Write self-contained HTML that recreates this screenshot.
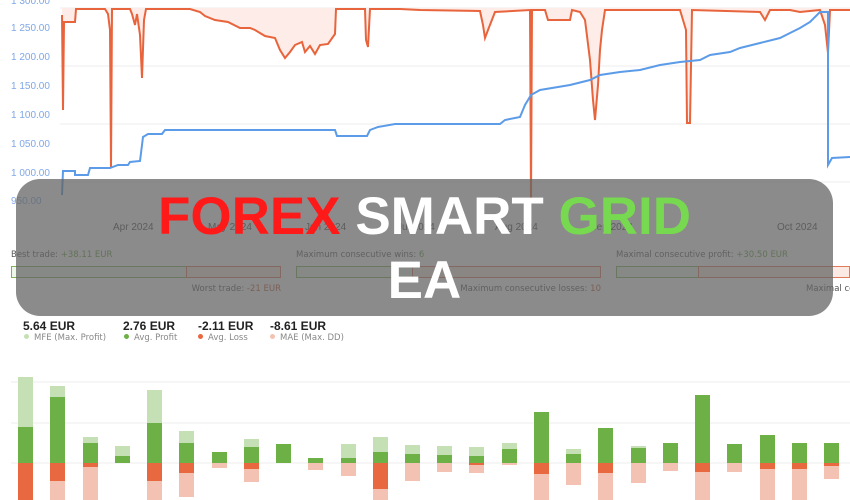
<!DOCTYPE html>
<html><head><meta charset="utf-8"><style>
html,body{margin:0;width:850px;height:500px;overflow:hidden;background:#fff;font-family:"Liberation Sans",sans-serif}
#w{position:relative;width:850px;height:500px;overflow:hidden}
.ab{position:absolute;white-space:nowrap}
.yl{position:absolute;left:11px;font-size:10px;color:#7fa7e6}
.xl{position:absolute;top:222px;font-size:10px;color:#444}
.st{font-size:8.5px;color:#555;font-family:"DejaVu Sans",sans-serif}
.val{font-size:12px;font-weight:bold;color:#222}
.lab{font-size:8.5px;color:#888;font-family:"DejaVu Sans",sans-serif}
.dot{display:inline-block;width:5px;height:5px;border-radius:50%;margin-right:5px;vertical-align:1px}
#ov{position:absolute;left:16px;top:179px;width:817px;height:137px;border-radius:24px;background:rgba(100,100,100,0.75)}
#tt{position:absolute;left:16px;top:179px;width:817px;text-align:center;font-weight:bold;font-size:53px;line-height:64px;padding-top:6px;color:#fff}
</style></head><body><div id="w">
<div class="yl" style="top:-4px">1 300.00</div>
<div class="yl" style="top:23px">1 250.00</div>
<div class="yl" style="top:52px">1 200.00</div>
<div class="yl" style="top:81px">1 150.00</div>
<div class="yl" style="top:110px">1 100.00</div>
<div class="yl" style="top:139px">1 050.00</div>
<div class="yl" style="top:168px">1 000.00</div>
<div class="yl" style="top:196px">950.00</div>
<svg class="ab" style="left:0;top:0" width="850" height="500">
<g stroke="#eee" stroke-width="1"><line x1="60" y1="8" x2="850" y2="8"/><line x1="60" y1="66" x2="850" y2="66"/><line x1="60" y1="124" x2="850" y2="124"/><line x1="60" y1="182" x2="850" y2="182"/>
<line x1="11" y1="382" x2="850" y2="382"/><line x1="11" y1="423" x2="850" y2="423"/><line x1="11" y1="463" x2="850" y2="463"/></g>
<path d="M62,8 L62,15 63,110 64,22 75,22 76,9 105,9 108,14 110,30 111,168 112,9 130,9 132,14 135,25 137,14 140,35 142,78 144,20 146,9 190,9 200,12 205,16 215,20 228,22 240,28 250,28 255,30 265,36 275,38 280,50 285,58 290,52 295,45 302,42 305,52 310,46 315,54 320,45 328,44 335,34 336,9 365,9 366,40 368,47 370,9 400,9 420,10 480,11 483,25 485,38 488,30 495,12 530,10 531,200 532,10 545,10 548,20 570,20 572,10 580,12 585,20 590,60 593,100 595,120 598,85 600,50 602,30 605,10 680,10 686,30 687,123 690,123 692,10 760,12 765,20 770,10 790,10 800,12 820,10 825,25 828,53 830,10 850,10 L850,8 Z" fill="#fdece7" stroke="none"/>
<polyline fill="none" stroke="#e8643c" stroke-width="2" points="62,15 63,110 64,22 75,22 76,9 105,9 108,14 110,30 111,168 112,9 130,9 132,14 135,25 137,14 140,35 142,78 144,20 146,9 190,9 200,12 205,16 215,20 228,22 240,28 250,28 255,30 265,36 275,38 280,50 285,58 290,52 295,45 302,42 305,52 310,46 315,54 320,45 328,44 335,34 336,9 365,9 366,40 368,47 370,9 400,9 420,10 480,11 483,25 485,38 488,30 495,12 530,10 531,200 532,10 545,10 548,20 570,20 572,10 580,12 585,20 590,60 593,100 595,120 598,85 600,50 602,30 605,10 680,10 686,30 687,123 690,123 692,10 760,12 765,20 770,10 790,10 800,12 820,10 825,25 828,53 830,10 850,10"/>
<polyline fill="none" stroke="#5b9be8" stroke-width="2" points="62,195 63,171 75,171 75,175 88,175 90,168 110,168 118,165 128,165 130,162 140,161 143,137 148,134 162,134 165,130 335,130 337,136 367,136 370,130 378,127 395,124 500,124 505,120 520,117 525,105 531,95 540,90 570,85 590,80 600,75 620,72 640,70 660,65 680,62 700,60 710,55 730,52 740,48 760,43 780,38 790,33 800,28 810,22 820,12 828,12 828,165 832,158 850,157"/>
<g>
<rect x="18" y="377" width="15" height="50" fill="#c5e0b4"/><rect x="18" y="427" width="15" height="36" fill="#6db046"/><rect x="18" y="463" width="15" height="37" fill="#e8683f"/>
<rect x="50" y="386" width="15" height="11" fill="#c5e0b4"/><rect x="50" y="397" width="15" height="66" fill="#6db046"/><rect x="50" y="463" width="15" height="18" fill="#e8683f"/><rect x="50" y="481" width="15" height="19" fill="#f4c2b2"/>
<rect x="83" y="437" width="15" height="6" fill="#c5e0b4"/><rect x="83" y="443" width="15" height="20" fill="#6db046"/><rect x="83" y="463" width="15" height="4" fill="#e8683f"/><rect x="83" y="467" width="15" height="33" fill="#f4c2b2"/>
<rect x="115" y="446" width="15" height="10" fill="#c5e0b4"/><rect x="115" y="456" width="15" height="7" fill="#6db046"/>
<rect x="147" y="390" width="15" height="33" fill="#c5e0b4"/><rect x="147" y="423" width="15" height="40" fill="#6db046"/><rect x="147" y="463" width="15" height="18" fill="#e8683f"/><rect x="147" y="481" width="15" height="19" fill="#f4c2b2"/>
<rect x="179" y="431" width="15" height="12" fill="#c5e0b4"/><rect x="179" y="443" width="15" height="20" fill="#6db046"/><rect x="179" y="463" width="15" height="10" fill="#e8683f"/><rect x="179" y="473" width="15" height="24" fill="#f4c2b2"/>
<rect x="212" y="452" width="15" height="11" fill="#6db046"/><rect x="212" y="463" width="15" height="5" fill="#f4c2b2"/>
<rect x="244" y="439" width="15" height="8" fill="#c5e0b4"/><rect x="244" y="447" width="15" height="16" fill="#6db046"/><rect x="244" y="463" width="15" height="6" fill="#e8683f"/><rect x="244" y="469" width="15" height="13" fill="#f4c2b2"/>
<rect x="276" y="444" width="15" height="19" fill="#6db046"/>
<rect x="308" y="458" width="15" height="5" fill="#6db046"/><rect x="308" y="463" width="15" height="7" fill="#f4c2b2"/>
<rect x="341" y="444" width="15" height="14" fill="#c5e0b4"/><rect x="341" y="458" width="15" height="5" fill="#6db046"/><rect x="341" y="463" width="15" height="13" fill="#f4c2b2"/>
<rect x="373" y="437" width="15" height="15" fill="#c5e0b4"/><rect x="373" y="452" width="15" height="11" fill="#6db046"/><rect x="373" y="463" width="15" height="26" fill="#e8683f"/><rect x="373" y="489" width="15" height="11" fill="#f4c2b2"/>
<rect x="405" y="445" width="15" height="9" fill="#c5e0b4"/><rect x="405" y="454" width="15" height="9" fill="#6db046"/><rect x="405" y="463" width="15" height="18" fill="#f4c2b2"/>
<rect x="437" y="446" width="15" height="9" fill="#c5e0b4"/><rect x="437" y="455" width="15" height="8" fill="#6db046"/><rect x="437" y="463" width="15" height="9" fill="#f4c2b2"/>
<rect x="469" y="447" width="15" height="9" fill="#c5e0b4"/><rect x="469" y="456" width="15" height="7" fill="#6db046"/><rect x="469" y="463" width="15" height="2" fill="#e8683f"/><rect x="469" y="465" width="15" height="8" fill="#f4c2b2"/>
<rect x="502" y="443" width="15" height="6" fill="#c5e0b4"/><rect x="502" y="449" width="15" height="14" fill="#6db046"/><rect x="502" y="463" width="15" height="2" fill="#f4c2b2"/>
<rect x="534" y="412" width="15" height="51" fill="#6db046"/><rect x="534" y="463" width="15" height="11" fill="#e8683f"/><rect x="534" y="474" width="15" height="26" fill="#f4c2b2"/>
<rect x="566" y="449" width="15" height="5" fill="#c5e0b4"/><rect x="566" y="454" width="15" height="9" fill="#6db046"/><rect x="566" y="463" width="15" height="22" fill="#f4c2b2"/>
<rect x="598" y="428" width="15" height="35" fill="#6db046"/><rect x="598" y="463" width="15" height="10" fill="#e8683f"/><rect x="598" y="473" width="15" height="27" fill="#f4c2b2"/>
<rect x="631" y="446" width="15" height="2" fill="#c5e0b4"/><rect x="631" y="448" width="15" height="15" fill="#6db046"/><rect x="631" y="463" width="15" height="20" fill="#f4c2b2"/>
<rect x="663" y="443" width="15" height="20" fill="#6db046"/><rect x="663" y="463" width="15" height="8" fill="#f4c2b2"/>
<rect x="695" y="395" width="15" height="68" fill="#6db046"/><rect x="695" y="463" width="15" height="9" fill="#e8683f"/><rect x="695" y="472" width="15" height="28" fill="#f4c2b2"/>
<rect x="727" y="444" width="15" height="19" fill="#6db046"/><rect x="727" y="463" width="15" height="9" fill="#f4c2b2"/>
<rect x="760" y="435" width="15" height="28" fill="#6db046"/><rect x="760" y="463" width="15" height="6" fill="#e8683f"/><rect x="760" y="469" width="15" height="31" fill="#f4c2b2"/>
<rect x="792" y="443" width="15" height="20" fill="#6db046"/><rect x="792" y="463" width="15" height="6" fill="#e8683f"/><rect x="792" y="469" width="15" height="31" fill="#f4c2b2"/>
<rect x="824" y="443" width="15" height="20" fill="#6db046"/><rect x="824" y="463" width="15" height="3" fill="#e8683f"/><rect x="824" y="466" width="15" height="13" fill="#f4c2b2"/>
</g>
<g stroke-width="1" fill="none">
<rect x="11.5" y="266.5" width="175" height="11" stroke="#7cb35a" fill="#eef6e9"/><rect x="186.5" y="266.5" width="94" height="11" stroke="#e07a5a" fill="#fbe9e3"/>
<rect x="296.5" y="266.5" width="116" height="11" stroke="#7cb35a" fill="#eef6e9"/><rect x="412.5" y="266.5" width="188" height="11" stroke="#e07a5a" fill="#fbe9e3"/>
<rect x="616.5" y="266.5" width="82" height="11" stroke="#7cb35a" fill="#eef6e9"/><rect x="698.5" y="266.5" width="151" height="11" stroke="#e07a5a" fill="#fbe9e3"/>
</g>
</svg>
<div class="xl" style="left:113px">Apr 2024</div><div class="xl" style="left:208px">May 2024</div><div class="xl" style="left:305px">Jun 2024</div><div class="xl" style="left:397px">Jul 2024</div><div class="xl" style="left:495px">Aug 2024</div><div class="xl" style="left:590px">Sep 2024</div><div class="xl" style="left:777px">Oct 2024</div>
<div class="ab st" style="left:11px;top:250px">Best trade: <span style="color:#5a9a3a">+38.11 EUR</span></div>
<div class="ab st" style="left:296px;top:250px">Maximum consecutive wins: <span style="color:#5a9a3a">6</span></div>
<div class="ab st" style="left:616px;top:250px">Maximal consecutive profit: <span style="color:#5a9a3a">+30.50 EUR</span></div>
<div class="ab st" style="right:569px;top:284px">Worst trade: <span style="color:#c0502e">-21 EUR</span></div>
<div class="ab st" style="right:249px;top:284px">Maximum consecutive losses: <span style="color:#c0502e">10</span></div>
<div class="ab st" style="left:806px;top:284px;width:44px;overflow:hidden">Maximal consecutive loss</div>
<div class="ab val" style="left:23px;top:319px">5.64 EUR</div><div class="ab val" style="left:123px;top:319px">2.76 EUR</div><div class="ab val" style="left:198px;top:319px">-2.11 EUR</div><div class="ab val" style="left:270px;top:319px">-8.61 EUR</div>
<div class="ab lab" style="left:24px;top:333px"><span class="dot" style="background:#c5e0b4"></span>MFE (Max. Profit)</div>
<div class="ab lab" style="left:124px;top:333px"><span class="dot" style="background:#6db046"></span>Avg. Profit</div>
<div class="ab lab" style="left:198px;top:333px"><span class="dot" style="background:#e8683f"></span>Avg. Loss</div>
<div class="ab lab" style="left:270px;top:333px"><span class="dot" style="background:#f4c2b2"></span>MAE (Max. DD)</div>
<div id="ov"></div>
<div id="tt"><span style="color:#ff1a1a">FOREX</span> SMART <span style="color:#77d94f">GRID</span><br>EA</div>
</div></body></html>
